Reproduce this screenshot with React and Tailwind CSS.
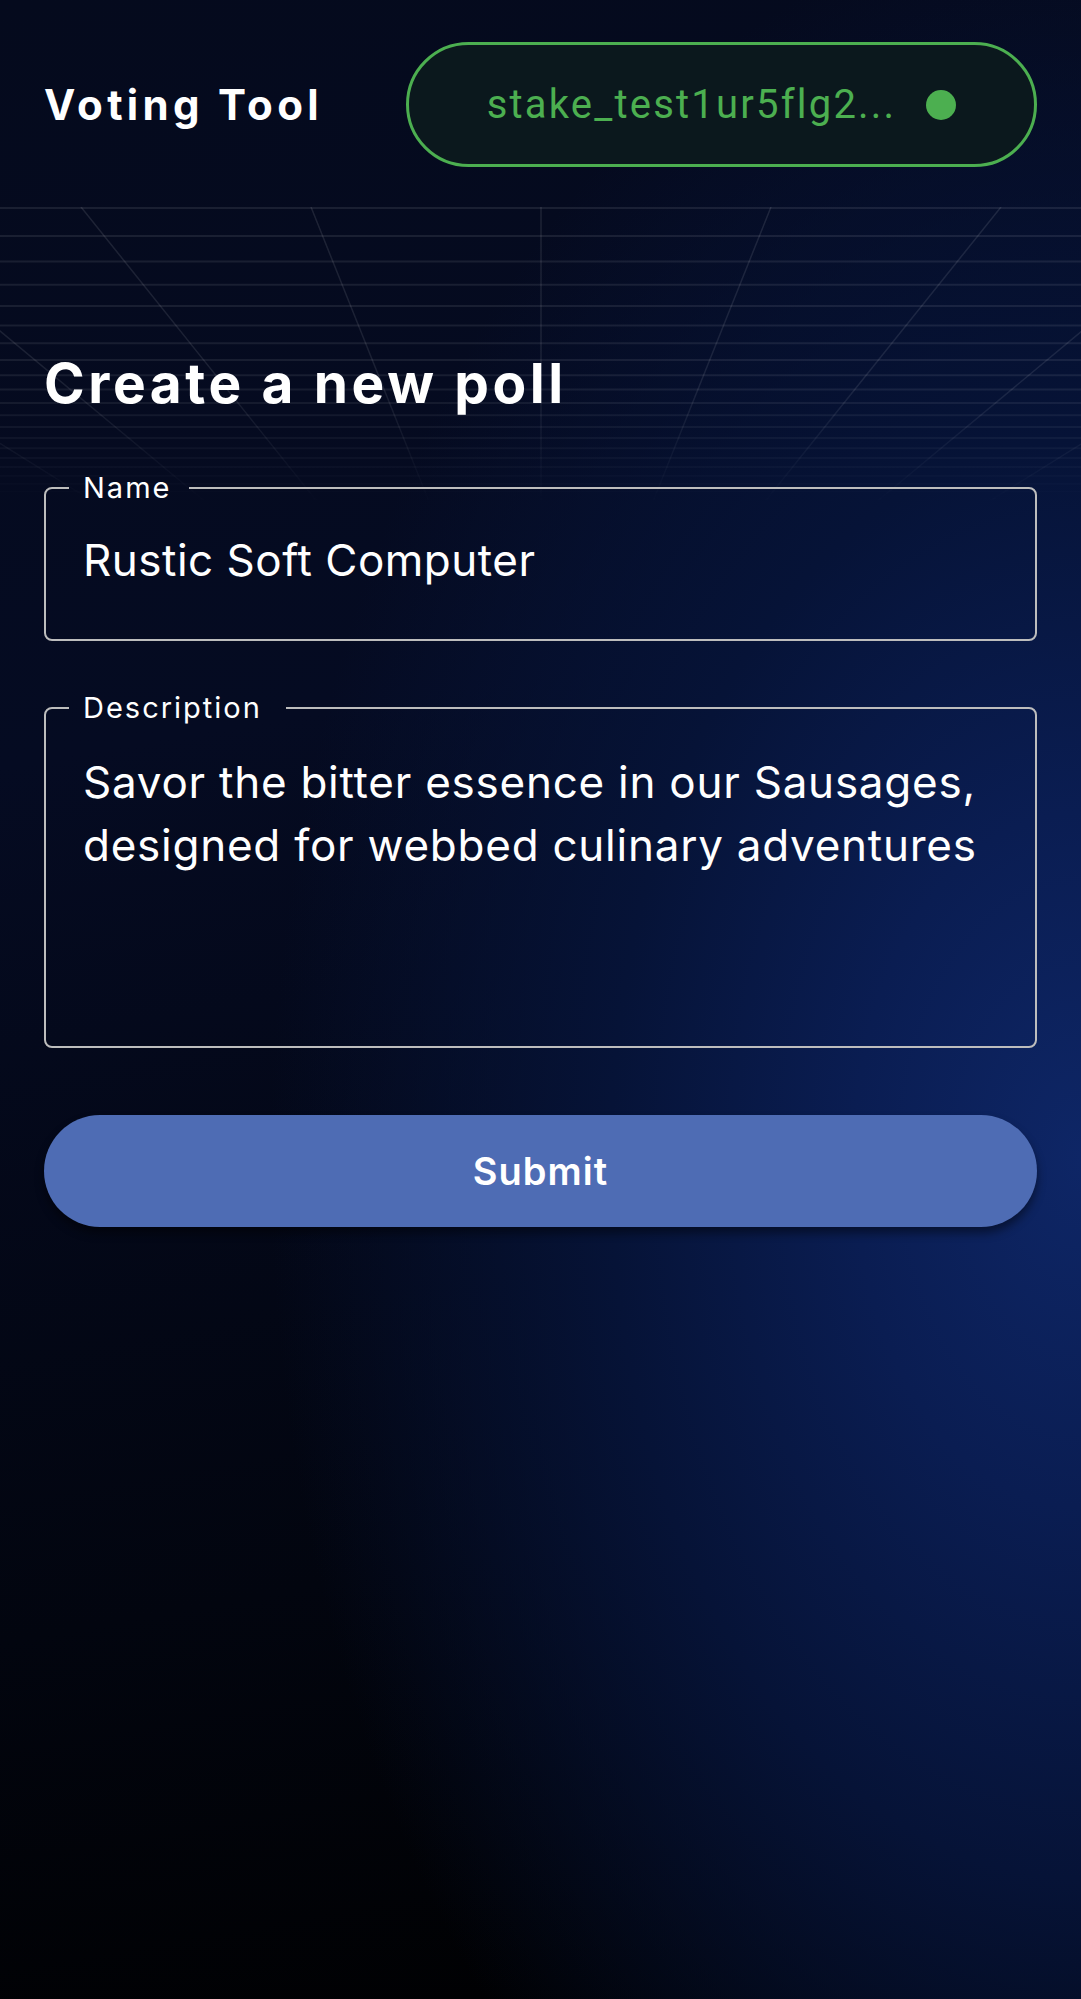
import React from "react";

function Grid() {
  const vpX = 541;
  const vpY = 781;
  const top = 207;
  const h = 300;
  const verts = [];
  for (let k = -6; k <= 6; k++) {
    const x0 = vpX + k * 230;
    const x1 = vpX + k * 230 * ((vpY - (top + h)) / (vpY - top));
    verts.push(<line key={"v" + k} x1={x0} y1={0} x2={x1} y2={h} stroke="rgba(255,255,255,0.1)" strokeWidth="1.5" />);
  }
  const hors = [];
  for (let n = 0; n < 24; n++) {
    const y = vpY - 1 / (0.001745 + 0.00009 * n) - top;
    if (y > h) break;
    hors.push(<line key={"h" + n} x1={0} y1={y} x2={1081} y2={y} stroke="rgba(255,255,255,0.085)" strokeWidth="2" />);
  }
  return (
    <svg className="absolute left-0 top-[207px] pointer-events-none" width="1081" height={h} viewBox={`0 0 1081 ${h}`}>
      <defs>
        <linearGradient id="fade" x1="0" y1="0" x2="0" y2="1">
          <stop offset="0" stopColor="white" stopOpacity="1" />
          <stop offset="0.6" stopColor="white" stopOpacity="0.9" />
          <stop offset="1" stopColor="white" stopOpacity="0" />
        </linearGradient>
        <mask id="m">
          <rect x="0" y="0" width="1081" height={h} fill="url(#fade)" />
        </mask>
      </defs>
      <g mask="url(#m)">
        {hors}
        {verts}
      </g>
    </svg>
  );
}

export default function App() {
  return (
    <div className="relative w-full min-h-[1999px] overflow-hidden font-['Inter',sans-serif] text-white bg-[radial-gradient(ellipse_75%_62%_at_100%_58%,#0e2666_0%,#0a1d52_28%,#061337_58%,transparent_100%),linear-gradient(170deg,#050a1d_0%,#050b22_35%,#02050f_75%,#000000_100%)]">
      <Grid />
      <header className="relative flex items-center justify-between px-[44px] pt-[42px] pb-[40px]">
        <h1 className="font-['Inter',sans-serif] font-bold text-[42px] leading-none tracking-[4.3px] text-white">Voting Tool</h1>
        <div className="flex h-[125px] w-[631px] items-center justify-center gap-[30px] rounded-full border-[3px] border-[#4caf50] bg-[#0b181d]">
          <span className="font-['Roboto',sans-serif] text-[40px] leading-none tracking-[2.2px] text-[#4caf50]">stake_test1ur5flg2...</span>
          <span className="h-[30px] w-[30px] rounded-full bg-[#4caf50]" />
        </div>
      </header>
      <main className="relative px-[44px]">
        <h2 className="mt-[143px] font-['Inter',sans-serif] font-bold text-[55px] leading-[67px] tracking-[3.6px] text-white">Create a new poll</h2>
        <fieldset className="mt-[53px] rounded-[8px] border-2 border-[#bdbdbd] p-0">
          <legend className="ml-[23px] pl-[14px] pr-[18px] text-[29px] leading-[35px] tracking-[2px] text-white">Name</legend>
          <div className="h-[134px] pl-[37px] pt-[29px] text-[44px] leading-[53px] tracking-[0.5px] text-white">Rustic Soft Computer</div>
        </fieldset>
        <fieldset className="mt-[49px] rounded-[8px] border-2 border-[#bdbdbd] p-0">
          <legend className="ml-[23px] pl-[14px] pr-[24px] text-[29px] leading-[35px] tracking-[2px] text-white">Description</legend>
          <div className="h-[321px] pl-[37px] pr-[20px] pt-[26px] text-[44px] leading-[63px] tracking-[0.75px] text-white">
            Savor the bitter essence in our Sausages, designed for webbed culinary adventures
          </div>
        </fieldset>
        <button className="mt-[67px] flex h-[112px] w-full items-center justify-center rounded-full bg-[#4e6cb4] text-[38px] font-semibold tracking-[1px] text-white shadow-[0_6px_10px_rgba(0,0,0,0.45)]">
          Submit
        </button>
      </main>
    </div>
  );
}
